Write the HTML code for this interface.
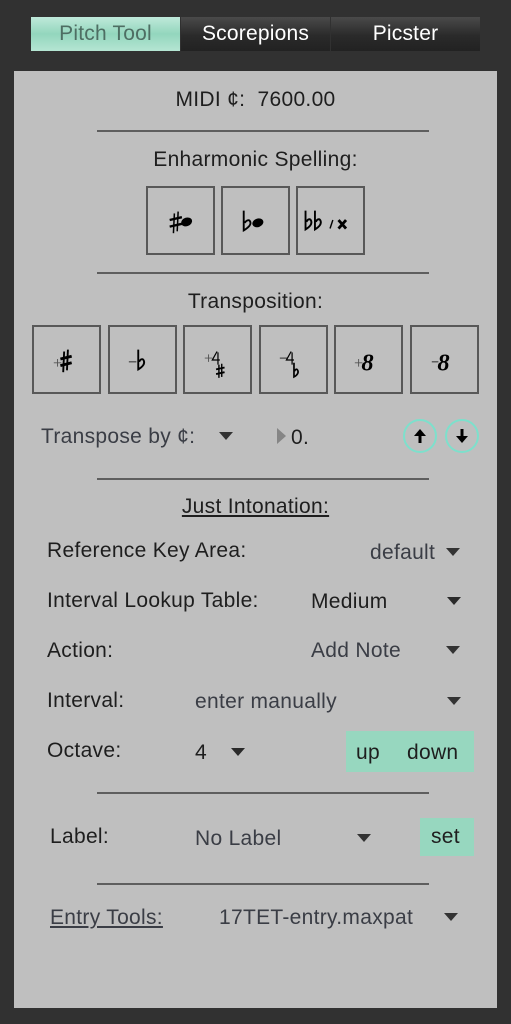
<!DOCTYPE html>
<html><head><meta charset="utf-8"><style>
*{margin:0;padding:0;box-sizing:border-box}
body{width:511px;height:1024px;background:#313131;position:relative;overflow:hidden;font-family:"Liberation Sans","DejaVu Sans",sans-serif;}
.a{position:absolute;line-height:24px;height:24px;font-size:21px;letter-spacing:0.3px;color:#1e1e1e;white-space:nowrap}
.g{color:#3a3d45}
.c{text-align:center}
.tab{position:absolute;top:17px;height:34px;line-height:34px;font-size:21px;letter-spacing:0.2px;text-align:center;color:#fff;background:linear-gradient(#4a4a4a,#2a2a2a 55%,#222)}
.hr{position:absolute;left:97px;width:332px;height:2px;background:#5e5e5e}
.btn{position:absolute;border:2px solid #585858;width:69px;height:69px}
.btn svg{width:100%;height:100%}
.tri{position:absolute;width:0;height:0;border-left:7px solid transparent;border-right:7px solid transparent;border-top:8px solid #2a2a2a}
.circ{position:absolute;width:34px;height:34px;border:2px solid #7de0cc;border-radius:50%}
.mint{position:absolute;background:#97d7bf}
</style></head><body>
<div class="tab" style="left:31px;width:149px;background:linear-gradient(#bfe9da,#93d6bd 50%,#b5e5d3);color:#4e6e63">Pitch Tool</div>
<div class="tab" style="left:181px;width:149px">Scorepions</div>
<div class="tab" style="left:331px;width:149px">Picster</div>
<div style="position:absolute;left:14px;top:71px;width:483px;height:937px;background:#bfbfbf"></div>

<div class="a c" style="left:14px;width:483px;top:88px">MIDI ¢:&nbsp; 7600.00</div>
<div class="hr" style="top:130px"></div>
<div class="a c" style="left:14px;width:483px;top:148px">Enharmonic Spelling:</div>

<div class="btn" style="left:146px;top:186px"><svg viewBox="0 0 69 69"><g stroke="#000" stroke-width="1.6"><line x1="28" y1="27" x2="27" y2="48"/><line x1="32" y1="25" x2="31" y2="46"/><line x1="23" y1="34" x2="36" y2="31" stroke-width="2.5"/><line x1="23" y1="41" x2="36" y2="38" stroke-width="2.5"/></g><ellipse cx="41" cy="36" rx="6" ry="4.5" transform="rotate(-20 41 36)"/></svg></div>
<div class="btn" style="left:221px;top:186px"><svg viewBox="0 0 69 69"><path d="M22 24V45C27 42 30 39 29 36C28 33 25 34 23 37" fill="none" stroke="#000" stroke-width="2"/><ellipse cx="37" cy="37" rx="6" ry="4.5" transform="rotate(-20 37 37)"/></svg></div>
<div class="btn" style="left:296px;top:186px"><svg viewBox="0 0 69 69"><g fill="none" stroke="#000" stroke-width="2"><path d="M8 24V44C13 41 15 38 14 35C13 32 10 33 9 36"/><path d="M18 24V44C23 41 25 38 24 35C23 32 20 33 19 36"/><line x1="34" y1="43" x2="37" y2="34" stroke-width="1.5"/><path d="M43 34L51 43M51 34L43 43" stroke-width="3"/></g></svg></div>

<div class="hr" style="top:272px"></div>
<div class="a c" style="left:14px;width:483px;top:290px">Transposition:</div>

<div class="btn" style="left:32px;top:325px"><svg viewBox="0 0 69 69"><g stroke="#000"><path d="M21 38h8M25 34v8" stroke="#555" stroke-width="1"/><line x1="32" y1="26" x2="31" y2="48" stroke-width="2"/><line x1="36" y1="24" x2="35" y2="46" stroke-width="2"/><line x1="28" y1="34" x2="40" y2="31" stroke-width="3"/><line x1="28" y1="41" x2="40" y2="38" stroke-width="3"/></g></svg></div>
<div class="btn" style="left:108px;top:325px"><svg viewBox="0 0 69 69"><path d="M20 37h8" stroke="#222" stroke-width="1"/><path d="M30 24V45C35 42 37 39 36 36C35 33 32 34 31 37" fill="none" stroke="#000" stroke-width="2"/></svg></div>
<div class="btn" style="left:183px;top:325px"><svg viewBox="0 0 69 69"><path d="M21 33h8M25 29v8" stroke="#555" stroke-width="1"/><path d="M34 26L29 35H37M35 27V40" fill="none" stroke="#000" stroke-width="1.3"/><g stroke="#000"><line x1="36" y1="40" x2="36" y2="54" stroke-width="1.5"/><line x1="39" y1="39" x2="39" y2="53" stroke-width="1.5"/><line x1="33" y1="45" x2="42" y2="43" stroke-width="2"/><line x1="33" y1="50" x2="42" y2="48" stroke-width="2"/></g></svg></div>
<div class="btn" style="left:259px;top:325px"><svg viewBox="0 0 69 69"><path d="M20 33h8" stroke="#222" stroke-width="1"/><path d="M32 26L27 35H35M33 27V40" fill="none" stroke="#000" stroke-width="1.3"/><path d="M35 38V53C39 51 40 48 39 46C38 44 36 45 35.5 47" fill="none" stroke="#000" stroke-width="1.8"/></svg></div>
<div class="btn" style="left:334px;top:325px"><svg viewBox="0 0 69 69"><path d="M20 38h8M24 34v8" stroke="#555" stroke-width="1"/><text x="27" y="46" font-family="Liberation Serif" font-weight="bold" font-style="italic" font-size="26" fill="#000">8</text></svg></div>
<div class="btn" style="left:410px;top:325px"><svg viewBox="0 0 69 69"><path d="M21 37h7" stroke="#222" stroke-width="1"/><text x="27" y="46" font-family="Liberation Serif" font-weight="bold" font-style="italic" font-size="26" fill="#000">8</text></svg></div>

<div class="a g" style="left:41px;top:425px">Transpose by ¢:</div>
<div class="tri" style="left:219px;top:432px;border-top-color:#333"></div>
<div style="position:absolute;left:277px;top:428px;width:0;height:0;border-top:8px solid transparent;border-bottom:8px solid transparent;border-left:9px solid #858585"></div>
<div class="a" style="left:291px;top:426px">0.</div>
<div class="circ" style="left:403px;top:419px"><svg viewBox="0 0 30 30" style="width:30px;height:30px"><path d="M15 22V12" stroke="#000" stroke-width="3"/><path d="M9 15L15 8L21 15Z" fill="#000"/></svg></div>
<div class="circ" style="left:445px;top:419px"><svg viewBox="0 0 30 30" style="width:30px;height:30px"><path d="M15 8V18" stroke="#000" stroke-width="3"/><path d="M9 15L15 22L21 15Z" fill="#000"/></svg></div>

<div class="hr" style="top:478px"></div>
<div class="a c" style="left:14px;width:483px;top:495px"><span style="text-decoration:underline">Just Intonation:</span></div>

<div class="a" style="left:47px;top:539px">Reference Key Area:</div>
<div class="a g" style="left:370px;top:541px">default</div>
<div class="tri" style="left:446px;top:548px;border-top-color:#333"></div>

<div class="a" style="left:47px;top:589px">Interval Lookup Table:</div>
<div class="a" style="left:311px;top:590px">Medium</div>
<div class="tri" style="left:447px;top:597px"></div>

<div class="a" style="left:47px;top:639px">Action:</div>
<div class="a g" style="left:311px;top:639px">Add Note</div>
<div class="tri" style="left:446px;top:646px;border-top-color:#333"></div>

<div class="a" style="left:47px;top:689px">Interval:</div>
<div class="a g" style="left:195px;top:690px">enter manually</div>
<div class="tri" style="left:447px;top:697px;border-top-color:#333"></div>

<div class="a" style="left:47px;top:739px">Octave:</div>
<div class="a" style="left:195px;top:741px">4</div>
<div class="tri" style="left:231px;top:748px"></div>
<div class="mint" style="left:346px;top:731px;width:128px;height:41px"></div>
<div class="a" style="left:356px;top:741px">up</div>
<div class="a" style="left:407px;top:741px">down</div>

<div class="hr" style="top:792px"></div>
<div class="a" style="left:50px;top:825px">Label:</div>
<div class="a g" style="left:195px;top:827px">No Label</div>
<div class="tri" style="left:357px;top:834px;border-top-color:#333"></div>
<div class="mint" style="left:420px;top:818px;width:54px;height:38px"></div>
<div class="a" style="left:431px;top:825px">set</div>

<div class="hr" style="top:883px"></div>
<div class="a g" style="left:50px;top:906px"><span style="text-decoration:underline">Entry Tools:</span></div>
<div class="a g" style="left:219px;top:906px">17TET-entry.maxpat</div>
<div class="tri" style="left:444px;top:913px;border-top-color:#333"></div>
</body></html>
